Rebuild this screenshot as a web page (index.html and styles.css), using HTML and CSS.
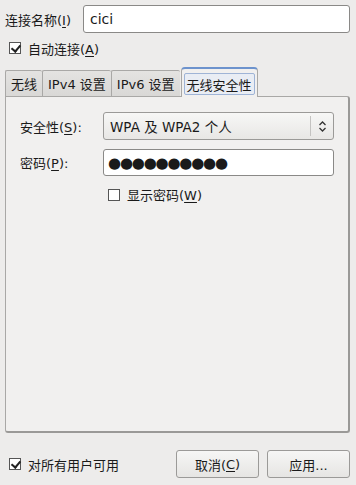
FILE: index.html
```html
<!DOCTYPE html>
<html lang="zh-CN">
  <head>
    <meta charset="UTF-8" />
    <title>编辑 cici</title>
    <link rel="stylesheet" href="styles.css">
  </head>
  <body>
    <div class="dialog">
      <div class="nameRow">
        <label class="label">连接名称(<u>I</u>)</label>
        <div class="entry nameEntry">cici</div>
      </div>

      <div class="check autoConnect">
        <span class="box checked"></span>
        <span>自动连接(<u>A</u>)</span>
      </div>

      <div class="tabs">
        <div class="tab">无线</div>
        <div class="tab">IPv4 设置</div>
        <div class="tab">IPv6 设置</div>
        <div class="tab active"><span class="focus">无线安全性</span></div>
      </div>

      <div class="panel">
        <div class="formRow">
          <label class="fieldLabel">安全性(<u>S</u>):</label>
          <div class="combo">
            <span class="comboText">WPA 及 WPA2 个人</span>
            <span class="comboArrow">
              <svg width="9" height="13" viewBox="0 0 9 13">
                <path d="M1.5 5 L4.5 2 L7.5 5 M1.5 8 L4.5 11 L7.5 8" fill="none" stroke="#333" stroke-width="1.3" />
              </svg>
            </span>
          </div>
        </div>
        <div class="formRow">
          <label class="fieldLabel">密码(<u>P</u>):</label>
          <div class="entry password">●●●●●●●●●●</div>
        </div>
        <div class="check showPassword">
          <span class="box"></span>
          <span>显示密码(<u>W</u>)</span>
        </div>
      </div>

      <div class="footer">
        <div class="check">
          <span class="box checked"></span>
          <span>对所有用户可用</span>
        </div>
        <div class="buttons">
          <div class="button">取消(<u>C</u>)</div>
          <div class="button">应用...</div>
        </div>
      </div>
    </div>
  </body>
</html>
```

FILE: styles.css
```css
* {
  box-sizing: border-box;
}
body {
  margin: 0;
  font-family: "DejaVu Sans", "Noto Sans CJK SC", sans-serif;
  font-size: 13px;
  color: #1a1a1a;
  background: #edeceb;
}

u {
  text-decoration-thickness: 1px;
  text-underline-offset: 2px;
}

.dialog {
  width: 356px;
  height: 485px;
  padding: 5px 6px 7px 5px;
  display: flex;
  flex-direction: column;
}

.nameRow {
  display: flex;
  align-items: center;
  height: 28px;
}

.label {
  width: 78px;
}

.entry {
  background: #fff;
  border: 1px solid #8a8987;
  border-radius: 3px;
  padding: 0 6px;
  display: flex;
  align-items: center;
}

.nameEntry {
  flex: 1;
  height: 28px;
  font-size: 14px;
}

.check {
  display: flex;
  align-items: center;
  gap: 7px;
}

.box {
  width: 12px;
  height: 12px;
  border: 1px solid #555;
  background: #fff;
  position: relative;
}

.box.checked::after {
  content: "";
  position: absolute;
  left: 3px;
  top: 0px;
  width: 4px;
  height: 7px;
  border-right: 2px solid #222;
  border-bottom: 2px solid #222;
  transform: rotate(40deg);
}

.autoConnect {
  margin: 8px 0 0 4px;
  height: 14px;
}

.tabs {
  display: flex;
  align-items: flex-end;
  margin-top: 12px;
  height: 29px;
  position: relative;
  z-index: 1;
}

.tab {
  height: 26px;
  padding: 0 5px;
  display: flex;
  align-items: center;
  background: linear-gradient(#e4e3e1, #d9d8d6);
  border: 1px solid #a9a8a6;
  border-bottom: none;
  border-right: none;
  border-radius: 2px 2px 0 0;
}

.tab.active {
  height: 30px;
  margin-left: 1px;
  padding: 4px 2px 2px 2px;
  background: #f1f0ef;
  border: 1px solid #a9a8a6;
  border-top: 2px solid #6d93cd;
  border-bottom: none;
  border-radius: 4px 4px 0 0;
  margin-bottom: -1px;
  align-items: stretch;
}

.focus {
  display: flex;
  align-items: center;
  padding: 0 2px;
  border: 1px solid #9fb4d6;
  border-radius: 2px;
  background: #e9edf4;
}

.panel {
  height: 337px;
  background: #f1f0ef;
  border: 1px solid #a9a8a6;
  border-right: 2px solid #9a9997;
  border-bottom: 2px solid #9a9997;
  border-radius: 0 3px 3px 3px;
  padding: 15px 14px 0 14px;
}

.formRow {
  display: flex;
  align-items: center;
  margin-bottom: 9px;
}

.fieldLabel {
  width: 83px;
}

.combo {
  flex: 1;
  height: 28px;
  display: flex;
  align-items: center;
  border: 1px solid #9b9a98;
  border-radius: 3px;
  background: linear-gradient(#f7f7f6, #e8e7e5);
  font-size: 13.5px;
}

.comboText {
  flex: 1;
  padding-left: 6px;
}

.comboArrow {
  width: 23px;
  height: 20px;
  border-left: 1px solid #c4c3c1;
  display: flex;
  align-items: center;
  justify-content: center;
}

.password {
  flex: 1;
  height: 27px;
  font-size: 15px;
  letter-spacing: -1.2px;
  padding-left: 4px;
}

.showPassword {
  margin-left: 88px;
  margin-top: 2px;
}

.footer {
  margin-top: auto;
  display: flex;
  align-items: center;
  justify-content: space-between;
}

.footer .check {
  margin-left: 4px;
}

.buttons {
  display: flex;
  gap: 8px;
}

.button {
  width: 83px;
  height: 28px;
  display: flex;
  align-items: center;
  justify-content: center;
  border: 1px solid #9b9a98;
  border-radius: 3px;
  background: linear-gradient(#f6f6f5, #e6e5e3);
}
```
